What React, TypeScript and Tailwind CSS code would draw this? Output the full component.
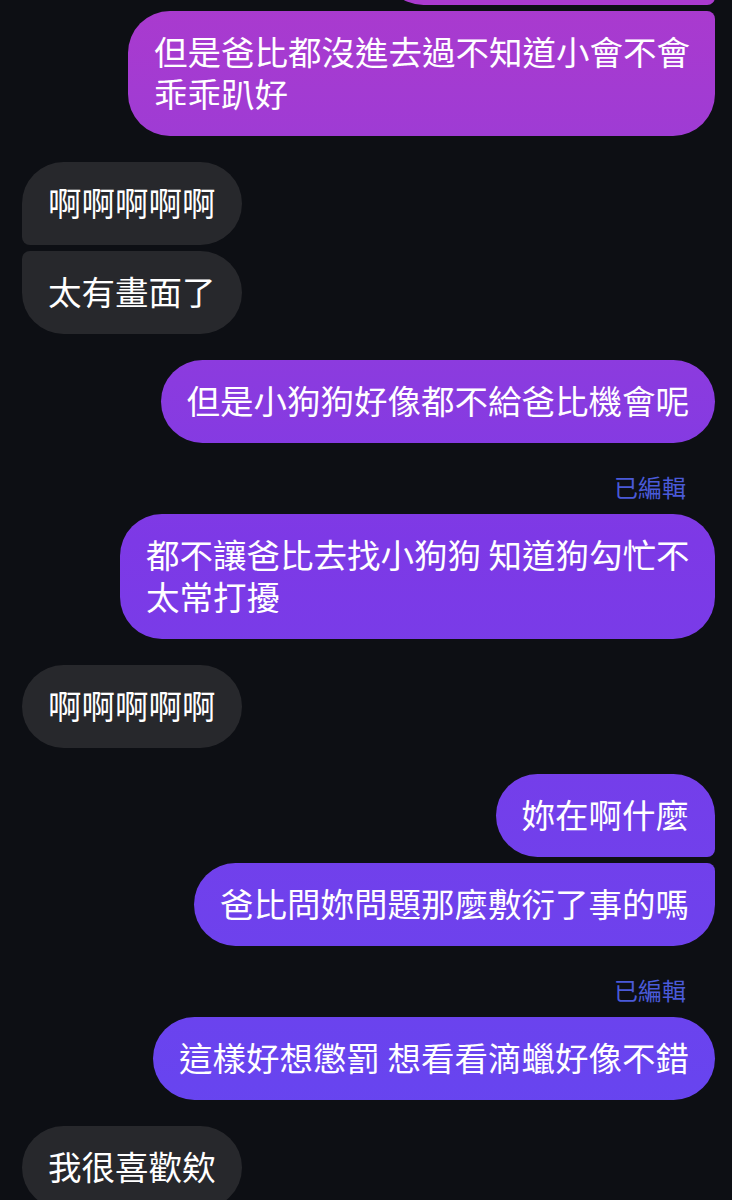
type Corner = "single" | "first" | "middle" | "last";

type Msg =
  | { kind: "out"; text: string; pos: Corner; w?: string }
  | { kind: "in"; text: string; pos: Corner }
  | { kind: "edited" };

const font = { fontFamily: '"Noto Sans CJK TC", "Noto Sans", sans-serif' };

const outRound: Record<Corner, string> = {
  single: "rounded-[42px]",
  first: "rounded-[42px] rounded-br-[8px]",
  middle: "rounded-l-[42px] rounded-r-[8px]",
  last: "rounded-[42px] rounded-tr-[8px]",
};

const inRound: Record<Corner, string> = {
  single: "rounded-[42px]",
  first: "rounded-[42px] rounded-bl-[8px]",
  middle: "rounded-r-[42px] rounded-l-[8px]",
  last: "rounded-[42px] rounded-tl-[8px]",
};

// line breaks are written out, as the phone wrapped them
const groups: Msg[][] = [
  [
    {
      kind: "out",
      text: "但是爸比都沒進去過不知道小會不會\n乖乖趴好",
      pos: "last",
      w: "w-[587px]",
    },
  ],
  [
    { kind: "in", text: "啊啊啊啊啊", pos: "first" },
    { kind: "in", text: "太有畫面了", pos: "last" },
  ],
  [{ kind: "out", text: "但是小狗狗好像都不給爸比機會呢", pos: "single" }],
  [
    { kind: "edited" },
    {
      kind: "out",
      text: "都不讓爸比去找小狗狗 知道狗勾忙不\n太常打擾",
      pos: "single",
      w: "w-[595px]",
    },
  ],
  [{ kind: "in", text: "啊啊啊啊啊", pos: "single" }],
  [
    { kind: "out", text: "妳在啊什麼", pos: "first" },
    { kind: "out", text: "爸比問妳問題那麼敷衍了事的嗎", pos: "last" },
  ],
  [
    { kind: "edited" },
    { kind: "out", text: "這樣好想懲罰 想看看滴蠟好像不錯", pos: "single" },
  ],
  [{ kind: "in", text: "我很喜歡欸", pos: "single" }],
];

function Bubble({ msg }: { msg: Msg }) {
  if (msg.kind === "edited") {
    return (
      <div className="flex justify-end pr-[29px] mb-[10px]">
        <span className="text-[24px] leading-[35px] text-[#4a5ad8]">已編輯</span>
      </div>
    );
  }
  const base =
    "px-[26px] pt-[19px] pb-[22px] text-[33.5px] leading-[42px] text-white whitespace-pre";
  if (msg.kind === "out") {
    return (
      <div className="flex justify-end">
        <div
          className={`${base} ${outRound[msg.pos]} ${msg.w ?? "w-fit"} bg-fixed bg-linear-to-b from-[#aa3ace] via-[#7d39e6] via-45% to-[#6346f1]`}
        >
          {msg.text}
        </div>
      </div>
    );
  }
  return (
    <div className="flex justify-start">
      <div className={`${base} ${inRound[msg.pos]} w-fit bg-[#27282c]`}>
        {msg.text}
      </div>
    </div>
  );
}

export default function App() {
  return (
    <div
      className="w-[732px] h-[1200px] overflow-hidden bg-[#0d0f14] pl-[22px] pr-[17px]"
      style={font}
    >
      <div className="flex justify-end -mt-[78px] mb-[6px]">
        <div className="w-[333px] h-[83px] rounded-[42px] rounded-br-[8px] bg-fixed bg-linear-to-b from-[#aa3ace] via-[#7d39e6] via-45% to-[#6346f1]" />
      </div>
      <div className="flex flex-col gap-[26px]">
        {groups.map((g, i) => (
          <div key={i} className="flex flex-col gap-[6px]">
            {g.map((m, j) =>
              m.kind === "edited" ? (
                <div key={j} className="-mb-[6px]">
                  <Bubble msg={m} />
                </div>
              ) : (
                <Bubble key={j} msg={m} />
              ),
            )}
          </div>
        ))}
      </div>
    </div>
  );
}
